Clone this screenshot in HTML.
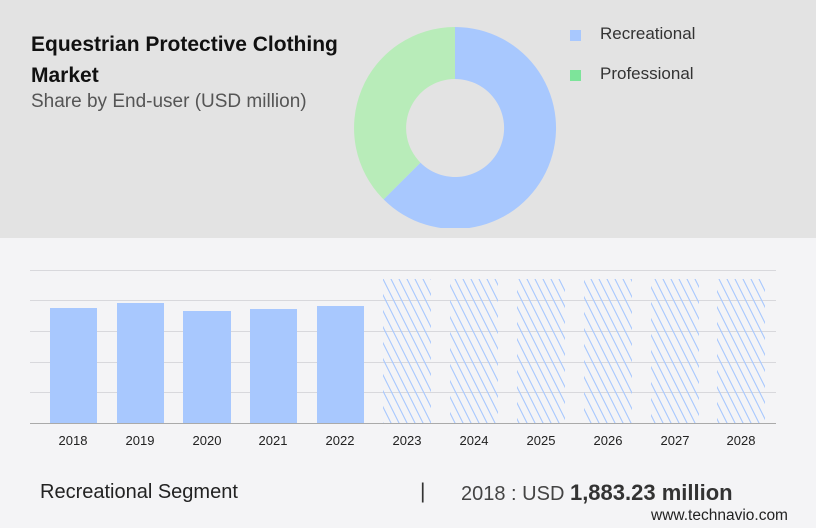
<!DOCTYPE html>
<html><head><meta charset="utf-8"><style>
body{margin:0;width:816px;height:528px;overflow:hidden;background:#f4f4f6;font-family:"Liberation Sans",sans-serif;position:relative}
.top{position:absolute;left:0;top:0;width:816px;height:238px;background:#e3e3e3}
.t{position:absolute;left:31px;top:29px;font-weight:bold;font-size:21px;line-height:31px;color:#111}
.s{position:absolute;left:31px;top:91px;font-size:19px;color:#555}
.lg{position:absolute;font-size:17px;color:#333}
.sq{position:absolute;width:11px;height:11px}
.yr{position:absolute;top:433px;font-size:13px;color:#222;width:60px;text-align:center}
</style></head><body>
<div class="top"></div>
<div class="t">Equestrian Protective Clothing<br>Market</div>
<div class="s">Share by End-user (USD million)</div>
<svg style="position:absolute;left:0;top:0" width="816" height="238">
<defs><clipPath id="c"><rect x="0" y="0" width="816" height="228"/></clipPath></defs>
<g clip-path="url(#c)">
<path d="M455,27 A101,101 0 1 1 383.6,199.4 L420.4,162.6 A49,49 0 1 0 455,79 Z" fill="#a8c8fe"/>
<path d="M383.6,199.4 A101,101 0 0 1 455,27 L455,79 A49,49 0 0 0 420.4,162.6 Z" fill="#b8ecb9"/>
</g></svg>
<div class="sq" style="left:570px;top:30px;background:#a8c8fe"></div>
<div class="lg" style="left:600px;top:24px">Recreational</div>
<div class="sq" style="left:570px;top:70px;background:#7de49a"></div>
<div class="lg" style="left:600px;top:64px">Professional</div>
<svg style="position:absolute;left:0;top:0" width="816" height="528">
<defs><pattern id="h" x="383" y="279" width="8" height="16" patternUnits="userSpaceOnUse"><path d="M-4,-8 L12,24 M4,-8 L20,24 M-12,-8 L4,24" stroke="#a8c8fe" stroke-width="1.1" fill="none"/></pattern></defs>
<g stroke="#d8d8dc" stroke-width="1">
<line x1="30" y1="270.5" x2="776" y2="270.5"/><line x1="30" y1="300.5" x2="776" y2="300.5"/>
<line x1="30" y1="331.5" x2="776" y2="331.5"/><line x1="30" y1="362.5" x2="776" y2="362.5"/>
<line x1="30" y1="392.5" x2="776" y2="392.5"/></g>
<g fill="#a8c8fe">
<rect x="50" y="308" width="47" height="115"/><rect x="117" y="303" width="47" height="120"/>
<rect x="183" y="311" width="48" height="112"/><rect x="250" y="309" width="47" height="114"/>
<rect x="317" y="306" width="47" height="117"/></g>
<g fill="url(#h)">
<rect x="383" y="279" width="48" height="144"/><rect x="450" y="279" width="48" height="144"/>
<rect x="517" y="279" width="48" height="144"/><rect x="584" y="279" width="48" height="144"/>
<rect x="651" y="279" width="48" height="144"/><rect x="717" y="279" width="48" height="144"/></g>
<line x1="30" y1="423.5" x2="776" y2="423.5" stroke="#aaa" stroke-width="1"/>
</svg>
<div class="yr" style="left:43px">2018</div><div class="yr" style="left:110px">2019</div>
<div class="yr" style="left:177px">2020</div><div class="yr" style="left:243px">2021</div>
<div class="yr" style="left:310px">2022</div><div class="yr" style="left:377px">2023</div>
<div class="yr" style="left:444px">2024</div><div class="yr" style="left:511px">2025</div>
<div class="yr" style="left:578px">2026</div><div class="yr" style="left:645px">2027</div>
<div class="yr" style="left:711px">2028</div>
<div style="position:absolute;left:40px;top:481px;font-size:20px;color:#222">Recreational Segment</div>
<div style="position:absolute;left:420px;top:480px;font-size:21px;color:#333">|</div>
<div style="position:absolute;left:461px;top:480px;font-size:20px;color:#444">2018 : USD <b style="color:#333;font-size:22px">1,883.23 million</b></div>
<div style="position:absolute;left:651px;top:507px;font-size:15.5px;color:#222">www.technavio.com</div>
</body></html>
